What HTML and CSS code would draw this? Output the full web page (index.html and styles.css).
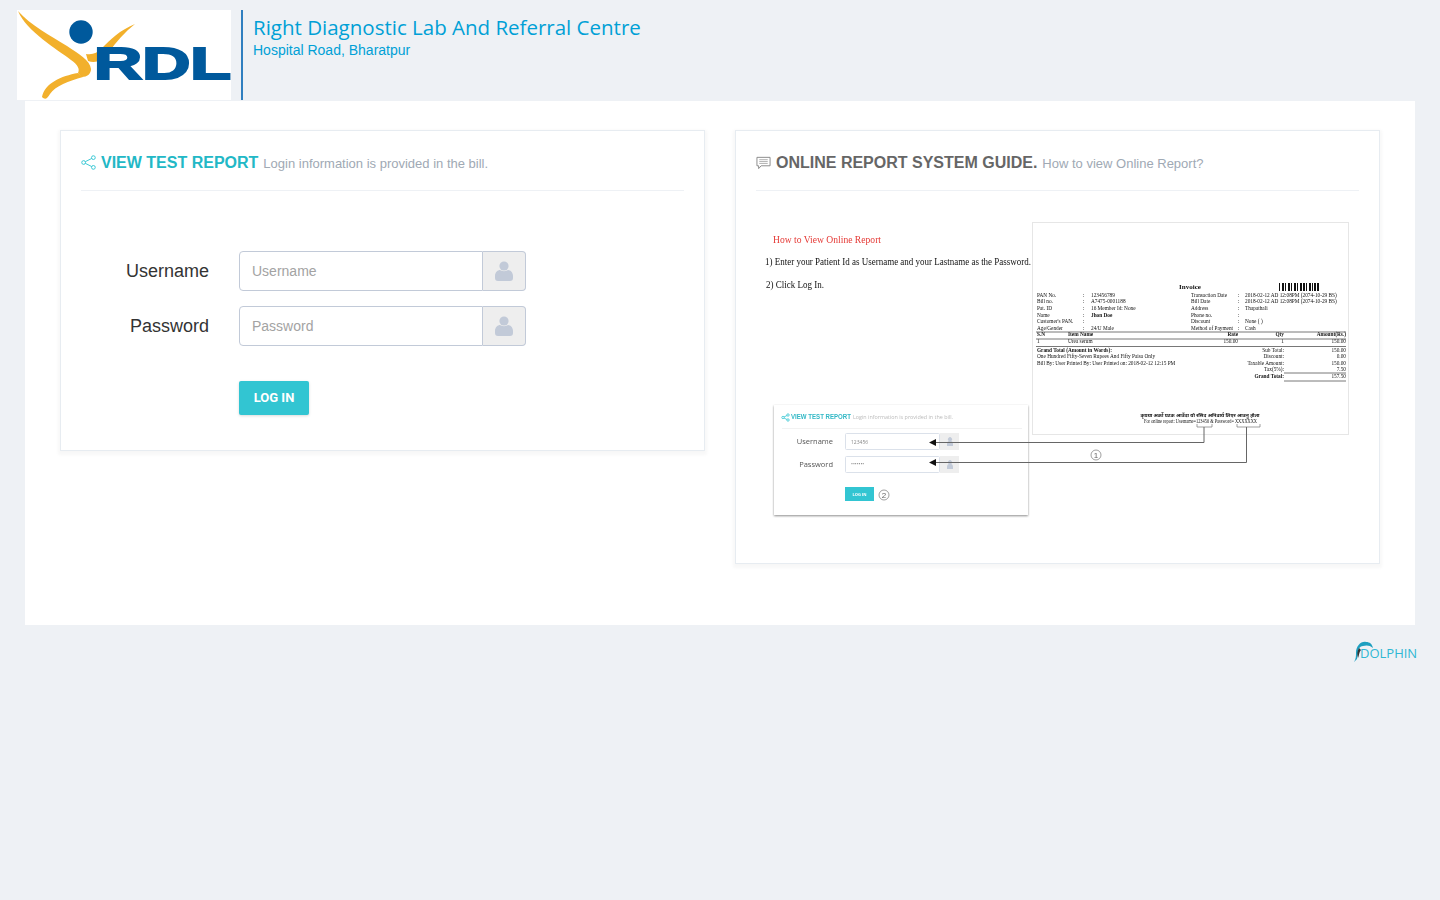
FILE: index.html
```html
<!DOCTYPE html>
<html lang="en">
<head>
  <meta charset="UTF-8">
  <title>Right Diagnostic Lab And Referral Centre</title>
  <link rel="stylesheet" href="styles.css">
</head>
<body>
  <header class="top-bar">
    <div class="logo">
      <svg width="214" height="90" viewBox="0 0 214 90">
        <circle cx="64" cy="22" r="11.7" fill="#00599c"/>
        <path fill="#f2b02c" d="M1 1C13 15 34 26 50 36C62 44 73 50 74 59C74 64 70 67 65 67L61 63C63 59 61 55 54 50C40 39 10 22 1 1Z"/>
        <path fill="#f2b02c" d="M61 63C44 66 28 73 25 87C28 90 30 89 33 84C38 76 52 71 66 67Z"/>
        <path fill="#f2b02c" d="M118 14C103 20 93 30 85 38C80 43 76 45 69 44L71 51C80 54 87 49 92 42C99 32 108 22 118 14Z"/>
        <text class="logo-text" x="77" y="69" textLength="137" lengthAdjust="spacingAndGlyphs">RDL</text>
      </svg>
    </div>
    <div class="lab-info">
      <h1>Right Diagnostic Lab And Referral Centre</h1>
      <p>Hospital Road, Bharatpur</p>
    </div>
  </header>

  <main class="content">
    <section class="card">
      <div class="card-head">
        <svg class="head-icon" width="15" height="15" viewBox="0 0 16 16">
          <g fill="none" stroke="#32c5d2" stroke-width="1">
            <circle cx="13.2" cy="2.8" r="2"/>
            <circle cx="2.8" cy="8" r="2"/>
            <circle cx="13.2" cy="13.2" r="2"/>
            <path d="M11.4 3.7L4.6 7.1M4.6 8.9L11.4 12.3"/>
          </g>
        </svg>
        <span class="card-title teal">VIEW TEST REPORT</span>
        <span class="card-sub">Login information is provided in the bill.</span>
      </div>
      <form class="login-form">
        <div class="form-row">
          <label for="username">Username</label>
          <div class="input-group">
            <input type="text" id="username" placeholder="Username">
            <span class="addon">
              <svg width="18" height="20" viewBox="0 0 18 20"><circle cx="9" cy="5" r="4.6" fill="#c2cad8"/><path fill="#c2cad8" d="M0 15C0 11 3 9 5 9C7 10.500 11 10.500 13 9C15 9 18 11 18 15V17C18 19 17 20 15 20H3C1 20 0 19 0 17Z"/></svg>
            </span>
          </div>
        </div>
        <div class="form-row">
          <label for="password">Password</label>
          <div class="input-group">
            <input type="password" id="password" placeholder="Password">
            <span class="addon">
              <svg width="18" height="20" viewBox="0 0 18 20"><circle cx="9" cy="5" r="4.6" fill="#c2cad8"/><path fill="#c2cad8" d="M0 15C0 11 3 9 5 9C7 10.500 11 10.500 13 9C15 9 18 11 18 15V17C18 19 17 20 15 20H3C1 20 0 19 0 17Z"/></svg>
            </span>
          </div>
        </div>
        <button type="button" class="login-btn">LOG IN</button>
      </form>
    </section>

    <section class="card">
      <div class="card-head">
        <svg class="head-icon" width="15" height="15" viewBox="0 0 16 16">
          <path fill="none" stroke="#888" d="M1 2.500H15V11.500H5.500L2.800 14.500V11.500H1Z"/>
          <path stroke="#999" stroke-width="0.8" d="M3.500 5H12.500M3.500 7H12.500M3.500 9H12.500"/>
        </svg>
        <span class="card-title gray">ONLINE REPORT SYSTEM GUIDE.</span>
        <span class="card-sub">How to view Online Report?</span>
      </div>
      <svg class="guide" width="603" height="372" viewBox="756 191 603 372">
        <text class="g-red" x="773" y="243" textLength="108" lengthAdjust="spacingAndGlyphs">How to View Online Report</text>
        <text class="g-step" x="765" y="265" textLength="266" lengthAdjust="spacingAndGlyphs">1) Enter your Patient Id as Username and your Lastname as the Password.</text>
        <text class="g-step" x="766" y="288" textLength="58" lengthAdjust="spacingAndGlyphs">2) Click Log In.</text>

        <rect class="g-sheet" x="1032.500" y="222.500" width="316" height="212"/>
        <text class="g-inv-title" x="1190" y="289" text-anchor="middle">Invoice</text>
        <path class="g-barcode" d="M1279 283h1v8h-1zM1282 283h2v8h-2zM1285 283h1v8h-1zM1288 283h2v8h-2zM1291 283h1v8h-1zM1294 283h2v8h-2zM1297 283h1v8h-1zM1300 283h2v8h-2zM1303 283h2v8h-2zM1306 283h1v8h-1zM1309 283h2v8h-2zM1312 283h1v8h-1zM1314 283h2v8h-2zM1317 283h2v8h-2z"/>

        <g class="g-inv">
          <text x="1037" y="297">PAN No.</text><text x="1083" y="297">:</text><text x="1091" y="297">123456789</text>
          <text x="1191" y="297">Transaction Date</text><text x="1238" y="297">:</text><text x="1245" y="297">2018-02-12 AD 12:08PM (2074-10-29 BS)</text>
          <text x="1037" y="303">Bill no.</text><text x="1083" y="303">:</text><text x="1091" y="303">A7475-0001188</text>
          <text x="1191" y="303">Bill Date</text><text x="1238" y="303">:</text><text x="1245" y="303">2018-02-12 AD 12:08PM (2074-10-29 BS)</text>
          <text x="1037" y="310">Pat. ID</text><text x="1083" y="310">:</text><text x="1091" y="310">16   Member Id: None</text>
          <text x="1191" y="310">Address</text><text x="1238" y="310">:</text><text x="1245" y="310">Thapathali</text>
          <text x="1037" y="317">Name</text><text x="1083" y="317">:</text><text class="g-b" x="1091" y="317">Jhon Doe</text>
          <text x="1191" y="317">Phone no.</text><text x="1238" y="317">:</text>
          <text x="1037" y="323">Customer's PAN.</text><text x="1083" y="323">:</text>
          <text x="1191" y="323">Discount</text><text x="1238" y="323">:</text><text x="1245" y="323">None ( )</text>
          <text x="1037" y="330">Age/Gender</text><text x="1083" y="330">:</text><text x="1091" y="330">24/U Male</text>
          <text x="1191" y="330">Method of Payment</text><text x="1238" y="330">:</text><text x="1245" y="330">Cash</text>

          <text class="g-b" x="1037" y="336">S.N</text><text class="g-b" x="1068" y="336">Item Name</text>
          <text class="g-b g-r" x="1238" y="336">Rate</text><text class="g-b g-r" x="1284" y="336">Qty</text><text class="g-b g-r" x="1346" y="336">Amount(Rs.)</text>
          <text x="1037" y="343">1</text><text x="1068" y="343">Urea serum</text>
          <text class="g-r" x="1238" y="343">150.00</text><text class="g-r" x="1284" y="343">1</text><text class="g-r" x="1346" y="343">150.00</text>

          <text class="g-b" x="1037" y="352">Grand Total (Amount in Words):</text>
          <text class="g-r" x="1284" y="352">Sub Total:</text><text class="g-r" x="1346" y="352">150.00</text>
          <text x="1037" y="358">One Hundred Fifty-Seven Rupees And Fifty Paisa Only</text>
          <text class="g-r" x="1284" y="358">Discount:</text><text class="g-r" x="1346" y="358">0.00</text>
          <text x="1037" y="365">Bill By: User   Printed By: User   Printed on: 2018-02-12 12:15 PM</text>
          <text class="g-r" x="1284" y="365">Taxable Amount:</text><text class="g-r" x="1346" y="365">150.00</text>
          <text class="g-r" x="1284" y="371">Tax(5%):</text><text class="g-r" x="1346" y="371">7.50</text>
          <text class="g-b g-r" x="1284" y="378">Grand Total:</text><text class="g-r" x="1346" y="378">157.50</text>
        </g>
        <path class="g-rule" d="M1036 332H1346M1036 339H1346M1036 346.500H1346M1284 373H1346M1284 381H1346"/>

        <text class="g-notice" x="1200" y="417" text-anchor="middle">कृपया अर्को पटक आउँदा यो रसिद अनिवार्य लिएर आउनु होला</text>
        <text class="g-inv" x="1144" y="423" textLength="113" lengthAdjust="spacingAndGlyphs">For online report: Username=123456 &amp; Password= XXXXXXX</text>
        <path class="g-bracket" d="M1197 424V427H1212V424M1237 424V427H1260V424"/>

        <g class="g-mini">
          <rect class="g-mini-card" x="774" y="405" width="254" height="110"/>
          <g fill="none" stroke="#32c5d2" stroke-width="0.800">
            <circle cx="788" cy="415" r="1.200"/><circle cx="783" cy="417.500" r="1.200"/><circle cx="788" cy="420" r="1.200"/>
            <path d="M787 415.500L784 417M784 418L787 419.500"/>
          </g>
          <text class="g-mini-title" x="791" y="419" textLength="60" lengthAdjust="spacingAndGlyphs">VIEW TEST REPORT</text>
          <text class="g-mini-sub" x="853" y="419" textLength="100" lengthAdjust="spacingAndGlyphs">Login information is provided in the bill.</text>
          <path class="g-mini-line" d="M782 428.500H1022"/>
          <text class="g-mini-label" x="833" y="444">Username</text>
          <text class="g-mini-label" x="833" y="467">Password</text>
          <rect class="g-mini-input" x="845.500" y="433.500" width="94" height="16" rx="1"/>
          <rect class="g-mini-addon" x="940" y="433" width="19" height="17"/>
          <rect class="g-mini-input" x="845.500" y="456.500" width="94" height="16" rx="1"/>
          <rect class="g-mini-addon" x="940" y="456" width="19" height="17"/>
          <path fill="#c2cad8" d="M947 444c0-2 1-3 2-3a2 2 0 1 1 2 0c1 0 2 1 2 3v2h-6zM947 467c0-2 1-3 2-3a2 2 0 1 1 2 0c1 0 2 1 2 3v2h-6z"/>
          <text class="g-mini-value" x="851" y="444">123456</text>
          <text class="g-mini-value" x="851" y="466">•••••••</text>
          <rect fill="#32c5d2" x="845" y="487" width="29" height="14"/>
          <text class="g-mini-btn" x="859.500" y="496" text-anchor="middle">LOG IN</text>
        </g>

        <path class="g-arrow" d="M1204 427V442.500H935M1246.500 427V462.500H935"/>
        <path fill="#111" d="M929 442.500L936 439V446ZM929 462.500L936 459V466Z"/>
        <circle class="g-num" cx="1096" cy="455" r="5"/>
        <text class="g-num-text" x="1096" y="458" text-anchor="middle">1</text>
        <circle class="g-num" cx="884" cy="495" r="5"/>
        <text class="g-num-text" x="884" y="498" text-anchor="middle">2</text>
      </svg>
    </section>
  </main>

  <footer class="bottom-bar">
    <svg width="70" height="26" viewBox="0 0 70 26">
      <path fill="#1d9fc0" d="M1 22C3 19 3 16 3 13C3 6 8 1 13 2C17 2 19 4 20 8C17 5 13 5 10 6C7 6 5 9 5 13L4 19Z"/>
      <path fill="#333" d="M6 8C4 11 4 15 5 18C6 16 6 12 8 10Z"/>
      <text class="dolphin-text" x="7" y="18">DOLPHIN</text>
    </svg>
  </footer>
</body>
</html>
```

FILE: styles.css
```css
* {
  box-sizing: border-box;
}
body {
  margin: 0;
  background: #eef1f5;
  font-family: "Liberation Sans", Arial, sans-serif;
  color: #333;
}

/* top bar */
.top-bar {
  display: flex;
  height: 100px;
  padding: 10px 0 0 17px;
}
.logo {
  width: 214px;
  height: 90px;
  background: #fff;
}
.logo svg {
  display: block;
}
.logo-text {
  font-family: "Liberation Sans", Arial, sans-serif;
  font-weight: bold;
  font-size: 44px;
  fill: #00599c;
  stroke: #00599c;
  stroke-width: 2px;
}
.lab-info {
  margin-left: 10px;
  padding-left: 10px;
  border-left: 2px solid #2f7fc0;
  color: #00a0d6;
}
.lab-info h1 {
  margin: 2px 0 1px;
  font-family: "Open Sans", sans-serif;
  font-size: 20.500px;
  font-weight: 400;
  line-height: 30px;
}
.lab-info p {
  margin: 0;
  font-size: 14px;
  line-height: 15px;
}

/* main panel */
.content {
  display: grid;
  grid-template-columns: 1fr 1fr;
  gap: 30px;
  align-items: start;
  margin: 1px 25px 0;
  padding: 29px 35px 61px;
  background: #fff;
}
.card {
  padding: 0 20px;
  background: #fff;
  border: 1px solid #e7ecf1;
  box-shadow: 0 2px 3px 2px rgba(0,0,0,0.03);
}
.card-head {
  display: flex;
  align-items: baseline;
  height: 60px;
  padding-top: 22px;
  border-bottom: 1px solid #eef1f5;
}
.head-icon {
  align-self: flex-start;
  margin: 2px 5px 0 0;
}
.card-title {
  font-size: 16px;
  font-weight: bold;
  line-height: 20px;
}
.teal {
  color: #22b8c6;
}
.gray {
  color: #666;
}
.card-sub {
  margin-left: 5px;
  font-size: 13px;
  color: #a0a9b4;
}

/* login form */
.login-form {
  padding: 60px 0 35px;
}
.form-row {
  display: flex;
  align-items: center;
  margin-bottom: 15px;
}
.form-row label {
  width: 128px;
  margin-right: 30px;
  font-size: 18px;
  text-align: right;
}
.input-group {
  display: flex;
  width: 287px;
  height: 40px;
}
.input-group input {
  flex: 1;
  min-width: 0;
  padding: 0 12px;
  border: 1px solid #c2cad8;
  border-radius: 4px 0 0 4px;
  font-family: "Liberation Sans", Arial, sans-serif;
  font-size: 14px;
  color: #555;
}
.input-group input::placeholder {
  color: #a3a3a3;
}
.addon {
  display: flex;
  align-items: center;
  justify-content: center;
  width: 43px;
  background: #eee;
  border: 1px solid #c2cad8;
  border-left: 0;
  border-radius: 0 4px 4px 0;
}
.login-btn {
  display: block;
  width: 70px;
  height: 34px;
  margin: 35px 0 0 158px;
  padding: 0 0 1px;
  background: #32c5d2;
  border: 0;
  border-radius: 2px;
  box-shadow: 0 1px 3px rgba(0,0,0,0.15);
  font-family: Roboto, sans-serif;
  font-size: 13px;
  font-weight: 700;
  color: #fff;
  cursor: pointer;
}

/* guide picture */
.guide {
  display: block;
  font-family: "Liberation Serif", "Times New Roman", serif;
  filter: blur(0.35px);
}
.g-red {
  font-size: 10px;
  fill: #e53935;
}
.g-step {
  font-size: 9.500px;
  fill: #111;
}
.g-sheet {
  fill: #fff;
  stroke: #e6e6e6;
}
.g-inv-title {
  font-size: 7px;
  font-weight: bold;
  fill: #111;
}
.g-barcode {
  fill: #111;
}
.g-inv {
  font-size: 5.300px;
  fill: #111;
}
.g-b {
  font-weight: bold;
}
.g-r {
  text-anchor: end;
}
.g-rule {
  fill: none;
  stroke: #555;
  stroke-width: 0.8;
}
.g-notice {
  font-family: "Noto Sans", "DejaVu Sans", sans-serif;
  font-size: 5px;
  font-weight: bold;
  fill: #111;
}
.g-bracket {
  fill: none;
  stroke: #777;
  stroke-width: 0.7;
}
.g-mini-card {
  fill: #fff;
  filter: drop-shadow(0 1px 1px rgba(0,0,0,0.45));
}
.g-mini text {
  font-family: "Open Sans", sans-serif;
}
.g-mini .g-mini-title {
  font-family: "Liberation Sans", Arial, sans-serif;
  font-size: 6.500px;
  font-weight: bold;
  fill: #32b8c6;
}
.g-mini-sub {
  font-size: 5px;
  fill: #bbb;
}
.g-mini-line {
  stroke: #f2f2f2;
}
.g-mini-label {
  font-size: 7.500px;
  fill: #555;
  text-anchor: end;
}
.g-mini-input {
  fill: #fff;
  stroke: #dbe1ea;
}
.g-mini-addon {
  fill: #eee;
}
.g-mini-value {
  font-size: 5px;
  fill: #888;
}
.g-mini-btn {
  font-size: 4px;
  font-weight: bold;
  fill: #fff;
}
.g-arrow {
  fill: none;
  stroke: #666;
}
.g-num {
  fill: #fff;
  stroke: #777;
  stroke-width: 0.7;
}
.g-num-text {
  font-family: "Liberation Sans", Arial, sans-serif;
  font-size: 8px;
  fill: #666;
}

/* footer */
.bottom-bar {
  display: flex;
  justify-content: flex-end;
  padding: 15px 17px 0 0;
}
.dolphin-text {
  font-family: "Open Sans", sans-serif;
  font-size: 13px;
  font-weight: 400;
  fill: #2fb7d3;
}
```
